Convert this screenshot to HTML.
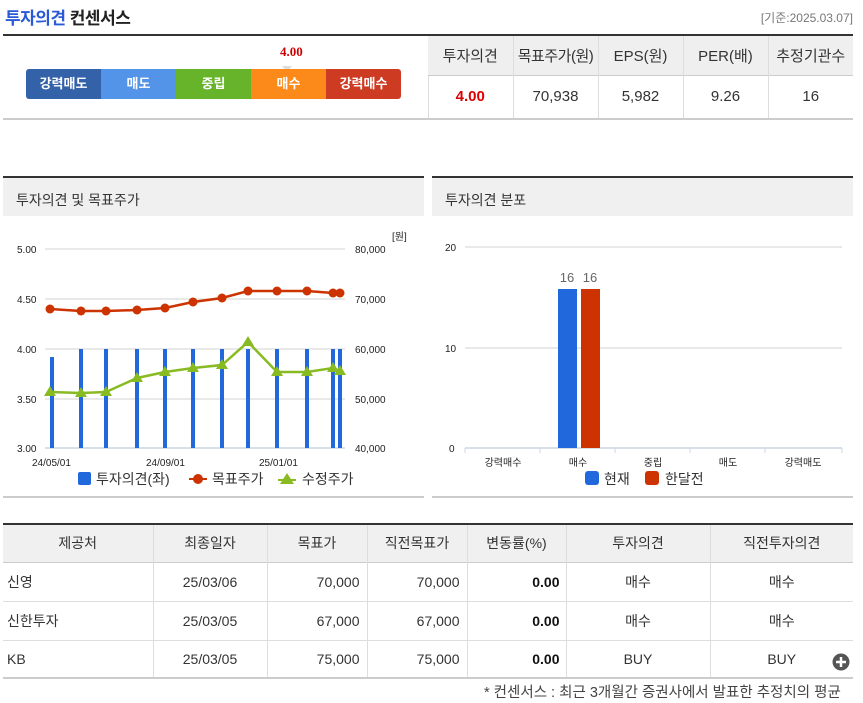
<!DOCTYPE html>
<html><head><meta charset="utf-8"><style>
*{margin:0;padding:0;box-sizing:border-box}
body{width:863px;height:703px;background:#fff;font-family:"Liberation Sans","Noto Sans CJK KR",sans-serif;color:#333;position:relative;overflow:hidden;font-size:13px}
.a{position:absolute}
table{border-collapse:collapse;position:absolute;table-layout:fixed}
td,th{font-weight:normal;font-size:14px;color:#333}
.t1 td,.t1 th{font-size:15px}
</style></head><body>
<div class="a" style="left:5px;top:4px;font-size:17px;font-weight:bold;letter-spacing:-0.5px"><span style="color:#2a5bd7">투자의견</span> <span style="color:#222">컨센서스</span></div>
<div class="a" style="right:10px;top:9px;font-size:12px;color:#777">[기준:2025.03.07]</div>
<div class="a" style="left:3px;top:34px;width:850px;height:2px;background:#333"></div>
<div class="a" style="left:3px;top:118px;width:426px;height:2px;background:#ccc"></div>
<div class="a" style="left:428px;top:36px;width:1px;height:83px;background:#ddd"></div>
<div class="a" style="left:280px;top:44px;font-size:13px;font-weight:bold;color:#c00;font-family:'Liberation Serif',serif">4.00</div>
<div class="a" style="left:282px;top:66px;width:0;height:0;border-left:5px solid transparent;border-right:5px solid transparent;border-top:6px solid #ddd"></div>
<div class="a" style="left:26px;top:69px;width:375px;height:30px;border-radius:3px;overflow:hidden;display:flex;color:#fff;font-size:13px;font-weight:bold;line-height:30px;text-align:center">
<div style="width:75px;background:#3462a8">강력매도</div><div style="width:75px;background:#5393e8">매도</div><div style="width:75px;background:#67b42a">중립</div><div style="width:75px;background:#fb8a1a">매수</div><div style="width:75px;background:#cc3b22">강력매수</div></div>
<table class="t1" style="left:428px;top:36px;width:425px;border-bottom:2px solid #ccc">
<tr style="height:39px;background:#efefef"><th style="border-right:1px solid #ddd">투자의견</th><th style="border-right:1px solid #ddd;letter-spacing:-0.5px">목표주가(원)</th><th style="border-right:1px solid #ddd">EPS(원)</th><th style="border-right:1px solid #ddd">PER(배)</th><th>추정기관수</th></tr>
<tr style="height:44px;text-align:center;border-top:1px solid #ccc"><td style="border-right:1px solid #ddd;color:#d00;font-weight:bold">4.00</td><td style="border-right:1px solid #ddd">70,938</td><td style="border-right:1px solid #ddd">5,982</td><td style="border-right:1px solid #ddd">9.26</td><td>16</td></tr></table>

<div class="a" style="left:3px;top:176px;width:421px;height:40px;background:#f0f0f0;border-top:2px solid #333;padding:12px 0 0 13px;font-size:14px">투자의견 및 목표주가</div>
<div class="a" style="left:432px;top:176px;width:421px;height:40px;background:#f0f0f0;border-top:2px solid #333;padding:12px 0 0 13px;font-size:14px">투자의견 분포</div>
<div class="a" style="left:3px;top:496px;width:421px;height:2px;background:#ccc"></div>
<div class="a" style="left:432px;top:496px;width:421px;height:2px;background:#ccc"></div>

<svg class="a" style="left:0;top:0" width="863" height="703" font-family="Liberation Sans,Noto Sans CJK KR,sans-serif">
<g stroke="#e2e2e2" stroke-width="1.5"><line x1="45" y1="249" x2="345" y2="249"/><line x1="45" y1="299" x2="345" y2="299"/><line x1="45" y1="349" x2="345" y2="349"/><line x1="45" y1="399" x2="345" y2="399"/></g>
<line x1="45" y1="448" x2="345" y2="448" stroke="#ccd6e6" stroke-width="1.5"/>
<g font-size="10" fill="#222"><text x="17" y="253">5.00</text><text x="17" y="303">4.50</text><text x="17" y="353">4.00</text><text x="17" y="403">3.50</text><text x="17" y="452">3.00</text>
<text x="355" y="253">80,000</text><text x="355" y="303">70,000</text><text x="355" y="353">60,000</text><text x="355" y="403">50,000</text><text x="355" y="452">40,000</text><text x="392" y="240">[원]</text>
<text x="32" y="466">24/05/01</text><text x="146" y="466">24/09/01</text><text x="259" y="466">25/01/01</text></g>
<g fill="#2168dd"><rect x="50" y="357" width="4" height="91"/><rect x="79" y="349" width="4" height="99"/><rect x="104" y="349" width="4" height="99"/><rect x="135" y="349" width="4" height="99"/><rect x="163" y="349" width="4" height="99"/><rect x="191" y="349" width="4" height="99"/><rect x="220" y="349" width="4" height="99"/><rect x="246" y="349" width="4" height="99"/><rect x="275" y="349" width="4" height="99"/><rect x="305" y="349" width="4" height="99"/><rect x="331" y="349" width="4" height="99"/><rect x="338" y="349" width="4" height="99"/></g>
<polyline fill="none" stroke="#cc3300" stroke-width="2.5" points="50,309 81,311 106,311 137,310 165,308 193,302 222,298 248,291 277,291 307,291 333,293 340,293"/>
<g fill="#cc3300"><circle cx="50" cy="309" r="4.5"/><circle cx="81" cy="311" r="4.5"/><circle cx="106" cy="311" r="4.5"/><circle cx="137" cy="310" r="4.5"/><circle cx="165" cy="308" r="4.5"/><circle cx="193" cy="302" r="4.5"/><circle cx="222" cy="298" r="4.5"/><circle cx="248" cy="291" r="4.5"/><circle cx="277" cy="291" r="4.5"/><circle cx="307" cy="291" r="4.5"/><circle cx="333" cy="293" r="4.5"/><circle cx="340" cy="293" r="4.5"/></g>
<polyline fill="none" stroke="#88bb22" stroke-width="2.5" points="50,392 81,393 106,392 137,378 165,372 193,368 222,365 248,342 277,372 307,372 333,368 340,371"/>
<g fill="#88bb22"><path d="M50,386l6,10h-12z"/><path d="M81,387l6,10h-12z"/><path d="M106,386l6,10h-12z"/><path d="M137,372l6,10h-12z"/><path d="M165,366l6,10h-12z"/><path d="M193,362l6,10h-12z"/><path d="M222,359l6,10h-12z"/><path d="M248,336l6,10h-12z"/><path d="M277,366l6,10h-12z"/><path d="M307,366l6,10h-12z"/><path d="M333,362l6,10h-12z"/><path d="M340,365l6,10h-12z"/></g>
<rect x="78" y="472" width="13" height="13" rx="2" fill="#2168dd"/><text x="96" y="484" font-size="14" fill="#333">투자의견(좌)</text>
<line x1="189" y1="479" x2="207" y2="479" stroke="#cc3300" stroke-width="2"/><circle cx="198" cy="479" r="5" fill="#cc3300"/><text x="212" y="484" font-size="14" fill="#333">목표주가</text>
<path d="M287,473l7,11h-14z" fill="#88bb22"/><line x1="278" y1="480" x2="296" y2="480" stroke="#88bb22" stroke-width="2"/><text x="302" y="484" font-size="14" fill="#333">수정주가</text>

<g stroke="#e2e2e2" stroke-width="1.5"><line x1="465" y1="247" x2="842" y2="247"/><line x1="465" y1="348" x2="842" y2="348"/></g>
<line x1="465" y1="448" x2="842" y2="448" stroke="#ccd6e6" stroke-width="1.5"/>
<g stroke="#ccd6e6"><line x1="465" y1="448" x2="465" y2="453"/><line x1="540" y1="448" x2="540" y2="453"/><line x1="615" y1="448" x2="615" y2="453"/><line x1="690" y1="448" x2="690" y2="453"/><line x1="765" y1="448" x2="765" y2="453"/><line x1="842" y1="448" x2="842" y2="453"/></g>
<g font-size="10" fill="#222"><text x="445" y="251">20</text><text x="445" y="352">10</text><text x="449" y="452">0</text></g>
<g font-size="10" fill="#222" text-anchor="middle"><text x="503" y="466">강력매수</text><text x="578" y="466">매수</text><text x="653" y="466">중립</text><text x="728" y="466">매도</text><text x="803" y="466">강력매도</text></g>
<rect x="558" y="289" width="19" height="159" fill="#2168dd"/><rect x="581" y="289" width="19" height="159" fill="#cc3300"/>
<g font-size="13" fill="#666" text-anchor="middle"><text x="567" y="282">16</text><text x="590" y="282">16</text></g>
<rect x="585" y="471" width="14" height="14" rx="3" fill="#2168dd"/><text x="604" y="484" font-size="14" fill="#333">현재</text>
<rect x="645" y="471" width="14" height="14" rx="3" fill="#cc3300"/><text x="665" y="484" font-size="14" fill="#333">한달전</text>
</svg>

<table style="left:3px;top:523px;width:850px;border-top:2px solid #333;border-bottom:2px solid #ccc">
<colgroup><col style="width:150px"><col style="width:114px"><col style="width:100px"><col style="width:100px"><col style="width:99px"><col style="width:144px"><col style="width:143px"></colgroup>
<tr style="height:38px;background:#f0f0f0;text-align:center"><th style="border-right:1px solid #ddd">제공처</th><th style="border-right:1px solid #ddd">최종일자</th><th style="border-right:1px solid #ddd">목표가</th><th style="border-right:1px solid #ddd">직전목표가</th><th style="border-right:1px solid #ddd">변동률(%)</th><th style="border-right:1px solid #ddd">투자의견</th><th>직전투자의견</th></tr>
<tr style="height:39px;border-top:1px solid #ccc"><td style="padding-left:4px;border-right:1px solid #ddd">신영</td><td style="text-align:center;border-right:1px solid #ddd">25/03/06</td><td style="text-align:right;padding-right:7px;border-right:1px solid #ddd">70,000</td><td style="text-align:right;padding-right:7px;border-right:1px solid #ddd">70,000</td><td style="text-align:right;padding-right:6px;border-right:1px solid #ddd;font-weight:bold;color:#111">0.00</td><td style="text-align:center;border-right:1px solid #ddd">매수</td><td style="text-align:center">매수</td></tr>
<tr style="height:39px;border-top:1px solid #ddd"><td style="padding-left:4px;border-right:1px solid #ddd">신한투자</td><td style="text-align:center;border-right:1px solid #ddd">25/03/05</td><td style="text-align:right;padding-right:7px;border-right:1px solid #ddd">67,000</td><td style="text-align:right;padding-right:7px;border-right:1px solid #ddd">67,000</td><td style="text-align:right;padding-right:6px;border-right:1px solid #ddd;font-weight:bold;color:#111">0.00</td><td style="text-align:center;border-right:1px solid #ddd">매수</td><td style="text-align:center">매수</td></tr>
<tr style="height:38px;border-top:1px solid #ddd"><td style="padding-left:4px;border-right:1px solid #ddd">KB</td><td style="text-align:center;border-right:1px solid #ddd">25/03/05</td><td style="text-align:right;padding-right:7px;border-right:1px solid #ddd">75,000</td><td style="text-align:right;padding-right:7px;border-right:1px solid #ddd">75,000</td><td style="text-align:right;padding-right:6px;border-right:1px solid #ddd;font-weight:bold;color:#111">0.00</td><td style="text-align:center;border-right:1px solid #ddd">BUY</td><td style="text-align:center">BUY</td></tr></table>
<svg class="a" style="left:832px;top:653px" width="18" height="18"><circle cx="9" cy="9" r="8.5" fill="#555"/><path d="M9,4v10M4,9h10" stroke="#fff" stroke-width="2.5"/></svg>
<div class="a" style="left:484px;top:681px;white-space:nowrap;font-size:14.5px;color:#444">* 컨센서스 : 최근 3개월간 증권사에서 발표한 추정치의 평균</div>
</body></html>
